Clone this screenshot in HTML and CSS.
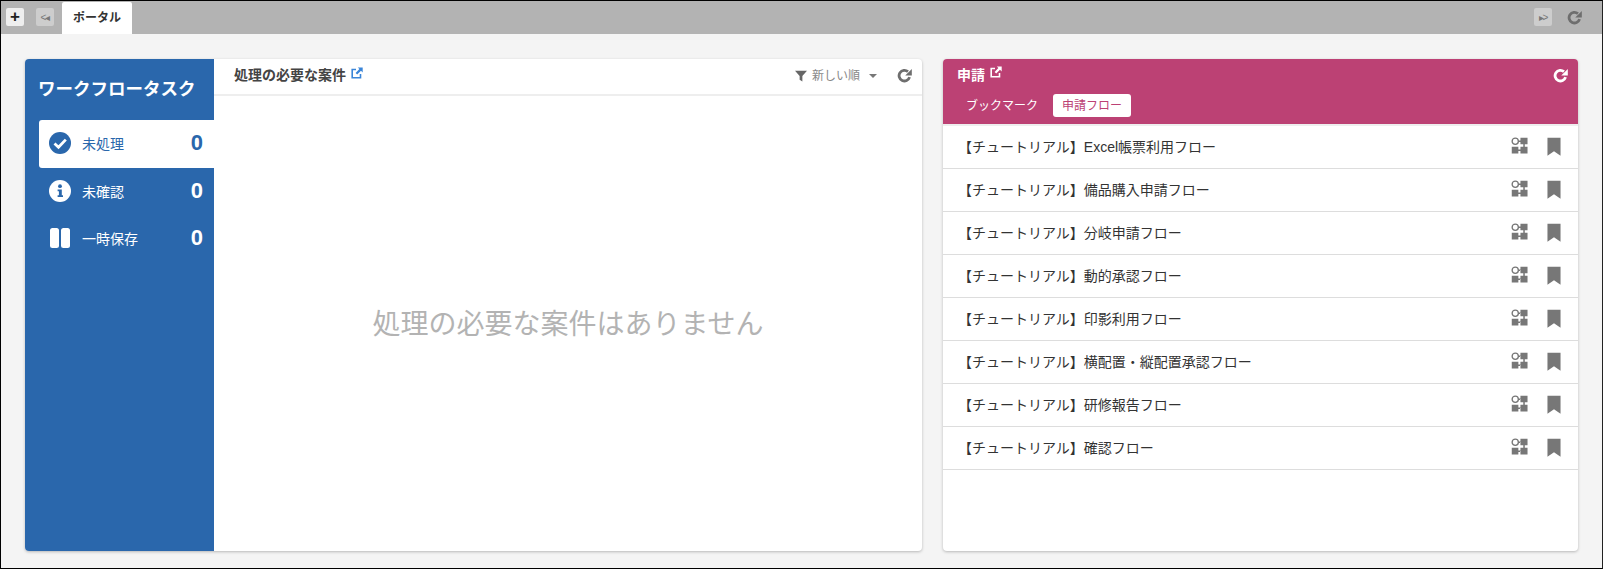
FILE: index.html
```html
<!DOCTYPE html>
<html lang="ja">
<head>
<meta charset="utf-8">
<title>ポータル</title>
<link rel="stylesheet" href="styles.css">
</head>
<body>
<svg class="defs" width="0" height="0" aria-hidden="true">
  <symbol id="reload" viewBox="0 0 16 16"><path d="M13.4 9.8A5.7 5.7 0 1 1 11.7 3.9" fill="none" stroke="currentColor" stroke-width="3"/><path d="M15.8 1V8H8.8Z" fill="currentColor"/></symbol>
  <symbol id="ext" viewBox="0 0 12 12"><path d="M9.5 7V10.7H1.2V2.5H5" fill="none" stroke="currentColor" stroke-width="1.6"/><path d="M6.8 .5H11.7V5.4L10 3.7 6.2 7.5 4.6 5.9 8.4 2.1Z" fill="currentColor"/></symbol>
  <symbol id="flow" viewBox="0 0 18 18"><circle cx="4.5" cy="4.5" r="3.3" fill="none" stroke="currentColor" stroke-width="1.4"/><path d="M8 3.7H10V5.3H8ZM10 .8H17.5V7.6H10ZM.8 10.2H7.8V17.4H.8ZM10 10.2H17.5V17.4H10ZM7.8 13.2H10V14.8H7.8ZM13 7.6H14.6V10.2H13Z" fill="currentColor"/></symbol>
  <symbol id="mark" viewBox="0 0 15 20"><path d="M.5 0H14.5V19.5L7.5 14.5.5 19.5Z" fill="currentColor"/></symbol>
</svg>
<div class="frame">
  <nav class="tabbar">
    <button class="tool tool-add">+</button>
    <button class="tool tool-nav tool-prev">&lt;◂</button>
    <div class="tab">ポータル</div>
    <button class="tool tool-nav tool-next">▸&gt;</button>
    <svg class="bar-reload"><use href="#reload"/></svg>
  </nav>
  <main class="content">
    <section class="card tasks">
      <aside class="side">
        <h1 class="side-title">ワークフロータスク</h1>
        <ul class="side-list">
          <li class="side-item active">
            <svg class="side-icon" viewBox="0 0 22 22"><circle cx="11" cy="11" r="11" fill="currentColor"/><path d="M5.5 11.5L9.5 15.3 16.8 7.6" fill="none" stroke="#fff" stroke-width="2.8"/></svg>
            <span class="side-label">未処理</span><span class="side-count">0</span>
          </li>
          <li class="side-item">
            <svg class="side-icon" viewBox="0 0 22 22"><circle cx="11" cy="11" r="11" fill="currentColor"/><circle cx="11" cy="6.2" r="1.9" fill="#2a67ac"/><path d="M8.6 9.4H12.8V15.2H14V17H8.6V15.2H9.9V11.2H8.6Z" fill="#2a67ac"/></svg>
            <span class="side-label">未確認</span><span class="side-count">0</span>
          </li>
          <li class="side-item">
            <svg class="side-icon" viewBox="0 0 22 22"><rect x="1" y="1" width="9" height="20" rx="2.5" fill="currentColor"/><rect x="12" y="1" width="9" height="20" rx="2.5" fill="currentColor"/></svg>
            <span class="side-label">一時保存</span><span class="side-count">0</span>
          </li>
        </ul>
      </aside>
      <div class="task-main">
        <header class="task-head">
          <h2 class="task-title">処理の必要な案件</h2>
          <svg class="ext ext-blue"><use href="#ext"/></svg>
          <div class="sort">
            <svg class="funnel" viewBox="0 0 14 14"><path d="M0 1H14L8.6 7V13.5L5.4 11.5V7Z" fill="currentColor"/></svg>
            <span class="sort-label">新しい順</span>
            <span class="caret"></span>
          </div>
          <svg class="head-reload"><use href="#reload"/></svg>
        </header>
        <div class="empty">処理の必要な案件はありません</div>
      </div>
    </section>
    <section class="card apply">
      <header class="apply-head">
        <div class="apply-top">
          <h2 class="apply-title">申請</h2>
          <svg class="ext"><use href="#ext"/></svg>
          <svg class="apply-reload"><use href="#reload"/></svg>
        </div>
        <div class="apply-tabs">
          <span class="apply-tab">ブックマーク</span>
          <span class="apply-tab on">申請フロー</span>
        </div>
      </header>
      <ul class="flows">
        <li class="flow"><span class="flow-name">【チュートリアル】Excel帳票利用フロー</span><svg class="i-flow"><use href="#flow"/></svg><svg class="i-mark"><use href="#mark"/></svg></li>
        <li class="flow"><span class="flow-name">【チュートリアル】備品購入申請フロー</span><svg class="i-flow"><use href="#flow"/></svg><svg class="i-mark"><use href="#mark"/></svg></li>
        <li class="flow"><span class="flow-name">【チュートリアル】分岐申請フロー</span><svg class="i-flow"><use href="#flow"/></svg><svg class="i-mark"><use href="#mark"/></svg></li>
        <li class="flow"><span class="flow-name">【チュートリアル】動的承認フロー</span><svg class="i-flow"><use href="#flow"/></svg><svg class="i-mark"><use href="#mark"/></svg></li>
        <li class="flow"><span class="flow-name">【チュートリアル】印影利用フロー</span><svg class="i-flow"><use href="#flow"/></svg><svg class="i-mark"><use href="#mark"/></svg></li>
        <li class="flow"><span class="flow-name">【チュートリアル】横配置・縦配置承認フロー</span><svg class="i-flow"><use href="#flow"/></svg><svg class="i-mark"><use href="#mark"/></svg></li>
        <li class="flow"><span class="flow-name">【チュートリアル】研修報告フロー</span><svg class="i-flow"><use href="#flow"/></svg><svg class="i-mark"><use href="#mark"/></svg></li>
        <li class="flow"><span class="flow-name">【チュートリアル】確認フロー</span><svg class="i-flow"><use href="#flow"/></svg><svg class="i-mark"><use href="#mark"/></svg></li>
      </ul>
    </section>
  </main>
</div>
</body>
</html>
```
FILE: styles.css
```css
* { box-sizing: border-box; }
html, body { margin: 0; height: 100%; overflow: hidden; }
body { font-family: "Liberation Sans", "Noto Sans CJK JP", sans-serif; color: #333; }
.defs { position: absolute; }
h1, h2, ul { margin: 0; padding: 0; }
ul { list-style: none; }

.frame { height: 569px; border: 1px solid #000; border-right-color: #222; background: #f4f4f4; display: flex; flex-direction: column; }

.tabbar { height: 33px; background: #b3b3b3; display: flex; align-items: flex-start; padding: 7px 20px 0 5px; flex: none; }
.tool { width: 18px; height: 18px; border: 0; padding: 0; border-radius: 2px; font-family: inherit; display: flex; align-items: center; justify-content: center; }
.tool-add { background: #eee; font-size: 17px; font-weight: bold; color: #222; }
.tool-nav { background: #cdcdcd; font-size: 10px; color: #777; letter-spacing: -1px; }
.tool-prev { margin-left: 12px; }
.tab { width: 70px; height: 32px; margin: -6px 0 0 8px; background: #fff; border-radius: 2px 2px 0 0; display: flex; align-items: center; justify-content: center; font-size: 12px; font-weight: bold; color: #333; padding-bottom: 3px; }
.tool-next { margin-left: auto; }
.bar-reload { width: 15px; height: 15px; margin: 2px 0 0 15px; color: #6e6e6e; }

.content { flex: 1; display: flex; gap: 21px; padding: 25px 24px 17px; min-height: 0; }
.card { background: #fff; border-radius: 4px; box-shadow: 0 1px 3px rgba(0,0,0,.25); overflow: hidden; }
.tasks { width: 897px; display: flex; }
.apply { width: 635px; display: flex; flex-direction: column; }

.side { width: 189px; background: #2a67ac; flex: none; color: #fff; padding-left: 14px; }
.side-title { font-size: 17.5px; font-weight: bold; line-height: 26px; padding-top: 17px; height: 61px; margin-left: -1px; white-space: nowrap; }
.side-list { display: flex; flex-direction: column; }
.side-item { height: 47.5px; display: flex; align-items: center; padding: 0 11px 2px 10px; font-size: 14px; }
.side-item.active { background: #fff; color: #2a67ac; border-radius: 3px 0 0 3px; height: 48px; }
.side-icon { width: 22px; height: 22px; flex: none; }
.side-label { margin-left: 11px; flex: 1; }
.side-count { font-size: 22px; font-weight: bold; line-height: 1; }

.task-main { flex: 1; display: flex; flex-direction: column; min-width: 0; }
.task-head { height: 37px; border-bottom: 2px solid #eee; display: flex; align-items: center; padding: 0 10px 2px 20px; flex: none; }
.task-title { font-size: 14px; font-weight: bold; color: #444; margin-bottom: 3px; }
.ext { width: 12px; height: 12px; margin-left: 5px; margin-bottom: 6px; color: #fff; }
.ext-blue { color: #3a85d8; }
.sort { margin-left: auto; display: flex; align-items: center; font-size: 12px; color: #888; }
.sort-label { margin-bottom: 2px; }
.funnel { width: 12px; height: 14px; color: #666; margin-right: 5px; }
.caret { width: 0; height: 0; border: 4px solid transparent; border-top: 4px solid #777; border-bottom: 0; margin-left: 9px; }
.head-reload { width: 15px; height: 15px; margin-left: 20px; color: #6e6e6e; }
.empty { flex: 1; display: flex; align-items: center; justify-content: center; font-size: 28px; color: #b3b3b3; padding-bottom: 3px; }

.apply-head { height: 65px; background: #bc4174; color: #fff; padding: 0 15px 0 14px; flex: none; }
.apply-top { display: flex; align-items: center; height: 32px; }
.apply-title { font-size: 14px; font-weight: bold; margin-bottom: 2px; }
.apply-top .ext { margin-left: 5px; margin-bottom: 7px; }
.apply-reload { width: 15px; height: 15px; margin-left: auto; margin-right: -5px; }
.apply-tabs { display: flex; gap: 15px; padding-left: 9px; margin-top: 3px; }
.apply-tab { font-size: 12px; height: 23px; display: flex; align-items: center; white-space: nowrap; padding-bottom: 2px; }
.apply-tab.on { background: #fff; color: #bc4174; border-radius: 3px; width: 78px; justify-content: center; }

.flows { border-top: 2px solid #eee; }
.flow { height: 43px; border-bottom: 1px solid #ddd; display: flex; align-items: center; padding: 0 17px 0 15px; font-size: 14px; color: #333; }
.flow-name { flex: 1; padding-bottom: 2px; }
.i-flow { width: 17px; height: 17px; color: #777; margin-bottom: 3px; }
.i-mark { width: 14px; height: 20px; color: #777; margin-left: 19px; margin-bottom: 1px; }
```
